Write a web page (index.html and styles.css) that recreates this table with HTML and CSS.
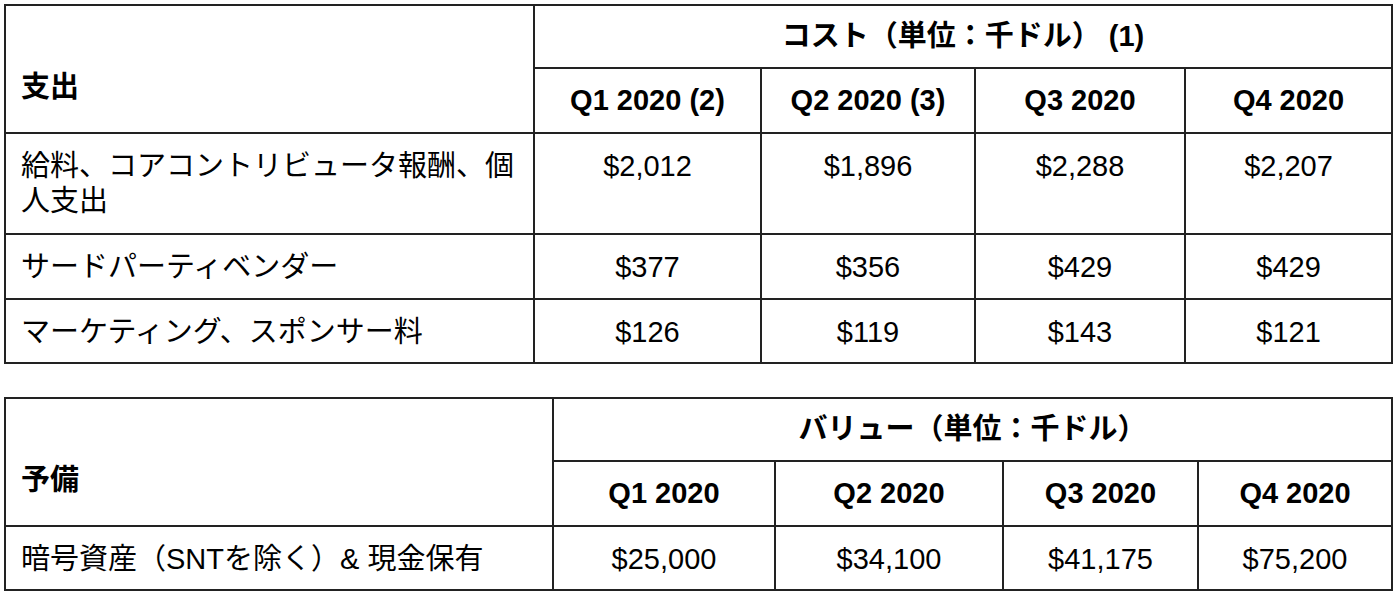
FILE: index.html
```html
<!DOCTYPE html>
<html lang="ja">
<head>
<meta charset="utf-8">
<title>コスト・予備</title>
<link rel="stylesheet" href="styles.css">
</head>
<body>
<table class="grid grid-cost">
  <colgroup>
    <col class="c-label">
    <col class="c-q1">
    <col class="c-q2">
    <col class="c-q3">
    <col class="c-q4">
  </colgroup>
  <thead>
    <tr class="h-top">
      <th class="label-head" rowspan="2">支出</th>
      <th class="group-head" colspan="4">コスト（単位：千ドル） (1)</th>
    </tr>
    <tr class="h-sub">
      <th>Q1 2020 (2)</th>
      <th>Q2 2020 (3)</th>
      <th>Q3 2020</th>
      <th>Q4 2020</th>
    </tr>
  </thead>
  <tbody>
    <tr class="r-tall">
      <td class="label">給料、コアコントリビュータ報酬、個人支出</td>
      <td>$2,012</td>
      <td>$1,896</td>
      <td>$2,288</td>
      <td>$2,207</td>
    </tr>
    <tr class="r-65">
      <td class="label">サードパーティベンダー</td>
      <td>$377</td>
      <td>$356</td>
      <td>$429</td>
      <td>$429</td>
    </tr>
    <tr class="r-64">
      <td class="label">マーケティング、スポンサー料</td>
      <td>$126</td>
      <td>$119</td>
      <td>$143</td>
      <td>$121</td>
    </tr>
  </tbody>
</table>

<table class="grid grid-reserve">
  <colgroup>
    <col class="c-label">
    <col class="c-q1">
    <col class="c-q2">
    <col class="c-q3">
    <col class="c-q4">
  </colgroup>
  <thead>
    <tr class="h-top">
      <th class="label-head" rowspan="2">予備</th>
      <th class="group-head" colspan="4">バリュー（単位：千ドル）</th>
    </tr>
    <tr class="h-sub">
      <th>Q1 2020</th>
      <th>Q2 2020</th>
      <th>Q3 2020</th>
      <th>Q4 2020</th>
    </tr>
  </thead>
  <tbody>
    <tr class="r-64">
      <td class="label">暗号資産（SNTを除く）&amp; 現金保有</td>
      <td>$25,000</td>
      <td>$34,100</td>
      <td>$41,175</td>
      <td>$75,200</td>
    </tr>
  </tbody>
</table>
</body>
</html>
```

FILE: styles.css
```css
html, body {
  background: #ffffff;
}

body {
  margin: 4px 0 0 4px;
  font-family: "Liberation Sans", "Noto Sans CJK JP", sans-serif;
  font-size: 29px;
  line-height: 35px;
  color: #000000;
}

.grid {
  border-collapse: collapse;
  table-layout: fixed;
  width: 1389px;
}

.grid th,
.grid td {
  border: 2px solid #222222;
  padding: 0 14px;
  text-align: center;
  overflow: hidden;
}

.grid th {
  font-weight: bold;
  vertical-align: middle;
}

.grid td {
  font-weight: normal;
  vertical-align: top;
  padding-top: 15px;
}

.grid .label-head {
  text-align: left;
  vertical-align: bottom;
  padding-bottom: 27px;
  padding-left: 15px;
}

.grid td.label {
  text-align: left;
  padding-left: 15px;
}

.h-top { height: 63px; }
.h-sub { height: 65px; }
.r-tall { height: 101px; }
.r-65 { height: 65px; }
.r-64 { height: 64px; }

.grid-cost .c-label { width: 529px; }
.grid-cost .c-q1 { width: 227px; }
.grid-cost .c-q2 { width: 214px; }
.grid-cost .c-q3 { width: 210px; }
.grid-cost .c-q4 { width: 207px; }

.grid-reserve {
  margin-top: 33px;
}

.grid-reserve .c-label { width: 548px; }
.grid-reserve .c-q1 { width: 222px; }
.grid-reserve .c-q2 { width: 228px; }
.grid-reserve .c-q3 { width: 195px; }
.grid-reserve .c-q4 { width: 194px; }
```
